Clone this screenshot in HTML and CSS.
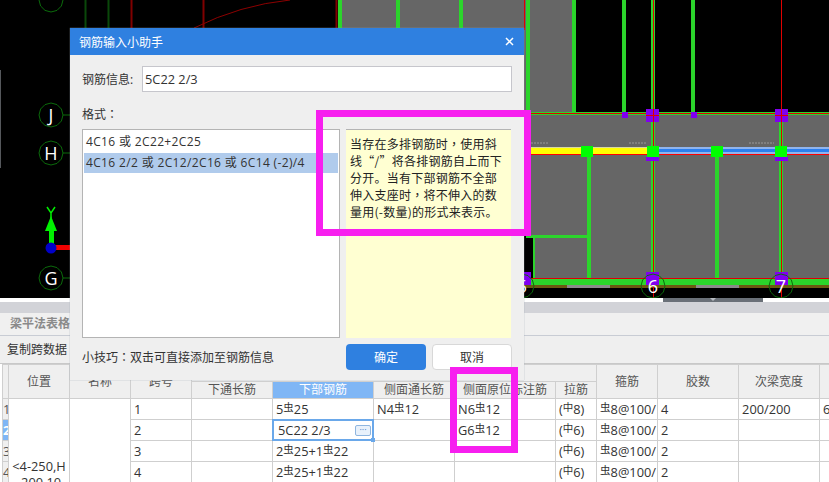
FILE: index.html
```html
<!DOCTYPE html>
<html>
    <head>
        <meta charset="utf-8">
        <meta name="viewport" content="initial-scale=1, width=device-width">
        <title>钢筋输入小助手</title>
        <link rel="stylesheet" href="styles.css">
    </head>
    <body>
    <svg class="cad" width="829" height="298" viewBox="0 0 829 298">
        <defs>
            <polygon id="axis" points="12,0 10.4,6 6,10.4 0,12 -6,10.4 -10.4,6 -12,0 -10.4,-6 -6,-10.4 0,-12 6,-10.4 10.4,-6" fill="none" stroke="#0b6b0b"/>
        </defs>
        <rect width="829" height="298" fill="#000"/>
        <rect x="0" y="70" width="1" height="98" fill="#55585c"/>
        <!-- grey slabs -->
        <rect x="342" y="0" width="184" height="115" fill="#666"/>
        <rect x="526" y="0" width="46" height="115" fill="#666"/>
        <rect x="531" y="115" width="298" height="120" fill="#666"/>
        <rect x="535" y="235" width="294" height="44" fill="#666"/>
        <!-- dim lines left of the slab -->
        <g stroke-width="2">
            <path d="M85.500 0V130M108.500 0V130" stroke="#0a480a"/>
            <path d="M131.500 0V130M203.500 0V30M336.500 0V40" stroke="#800000"/>
        </g>
        <path d="M194 28Q240 5 290 0" fill="none" stroke="#8c0000"/>
        <path d="M63 115H72M63 153H72M63 278H72" stroke="#0b6b0b"/>
        <!-- green walls -->
        <g fill="#2bd52b">
            <rect x="338" y="0" width="4" height="40"/>
            <rect x="396" y="0" width="4" height="40"/>
            <rect x="459" y="0" width="4" height="40"/>
            <rect x="526" y="0" width="4" height="115"/>
            <rect x="572" y="0" width="4" height="115"/>
            <rect x="622" y="0" width="4" height="115"/>
            <rect x="691" y="0" width="4" height="115"/>
            <rect x="651" y="0" width="4" height="115"/>
            <rect x="587" y="155" width="4" height="124"/>
            <rect x="715" y="155" width="4" height="124"/>
            <rect x="651" y="115" width="4" height="164"/>
            <rect x="779" y="115" width="4" height="164"/>
            <rect x="526" y="235" width="63" height="3"/>
            <rect x="533" y="238" width="2" height="41"/>
            <rect x="526" y="112" width="303" height="3"/>
            <rect x="524" y="279" width="305" height="6"/>
        </g>
        <rect x="524" y="285" width="305" height="3" fill="#6b5a12"/>
        <rect x="567" y="285" width="43" height="3" fill="#8a8a8a"/>
        <rect x="696" y="285" width="43" height="3" fill="#8a8a8a"/>
        <!-- red centre lines -->
        <path d="M530 113.500H829M524 278.500H829M524.500 0V30M653.500 0V298M781.500 0V298" stroke="#e00000"/>
        <!-- beam in the selection -->
        <rect x="531" y="147" width="116" height="7" fill="#ffff00"/>
        <rect x="531" y="147" width="116" height="1" fill="#d8d8a0"/>
        <rect x="659" y="147" width="170" height="7" fill="#8fb4ee"/>
        <rect x="659" y="149" width="170" height="3" fill="#2a7ff0"/>
        <rect x="531" y="154" width="298" height="1" fill="#f00"/>
        <path d="M531 143H548M629 143H646M749 143H774" stroke="#999" stroke-dasharray="2 1"/>
        <!-- columns and joints -->
        <g fill="#8000f0">
            <rect x="622" y="112" width="6" height="6"/>
            <rect x="691" y="112" width="6" height="6"/>
            <rect x="646" y="109" width="13" height="13"/>
            <rect x="775" y="109" width="13" height="13"/>
            <rect x="646" y="157" width="13" height="4"/>
            <rect x="775" y="157" width="13" height="4"/>
            <rect x="646" y="272" width="13" height="13"/>
            <rect x="775" y="272" width="13" height="13"/>
            <rect x="524" y="272" width="7" height="13"/>
        </g>
        <path d="M646 115.500H659M775 115.500H788M653.500 109V122M781.500 109V122" stroke="#e00000"/>
        <g fill="#00ff00">
            <rect x="581" y="146" width="12" height="11"/>
            <rect x="647" y="146" width="12" height="11"/>
            <rect x="711" y="146" width="12" height="11"/>
            <rect x="775" y="146" width="12" height="11"/>
        </g>
        <!-- axis bubbles -->
        <use href="#axis" x="51" y="0"/>
        <use href="#axis" x="51" y="115"/>
        <use href="#axis" x="51" y="153"/>
        <use href="#axis" x="51" y="278"/>
        <use href="#axis" x="522" y="286"/>
        <use href="#axis" x="653" y="286"/>
        <use href="#axis" x="781" y="286"/>
        <g class="axis-text" text-anchor="middle">
            <text x="51" y="122">J</text>
            <text x="51" y="160">H</text>
            <text x="51" y="285">G</text>
            <text x="522" y="293">5</text>
            <text x="653" y="293">6</text>
            <text x="781" y="293">7</text>
        </g>
        <!-- origin -->
        <rect x="49" y="225" width="5" height="23" fill="#00f000"/>
        <polygon points="51,216 57,231 45,231" fill="#00f000"/>
        <path d="M47 207L51 213L55 207M51 213V218" fill="none" stroke="#00f000" stroke-width="1.500"/>
        <rect x="51" y="245" width="20" height="5" fill="#f00000"/>
        <circle cx="51" cy="248" r="5.500" fill="#0000c8"/>
    </svg>
    <div class="scroll-strip"><div class="scroll-thumb"></div></div>
    <div class="grey-bar"></div>
    <div class="tabs"><span class="tab">梁平法表格</span></div>
    <div class="toolbar"><span>复制跨数据</span></div>

    <div class="grid-wrap">
    <table class="grid">
        <colgroup>
            <col class="c6"><col class="c61"><col class="c61"><col class="c61"><col class="c81"><col class="c101"><col class="c81"><col class="c101"><col class="c41"><col class="c61"><col class="c81"><col class="c81"><col class="c81">
        </colgroup>
        <thead>
            <tr class="head1">
                <th rowspan="2"></th>
                <th rowspan="2">位置</th>
                <th rowspan="2">名称</th>
                <th rowspan="2">跨号</th>
                <th colspan="5"></th>
                <th rowspan="2">箍筋</th>
                <th rowspan="2">胶数</th>
                <th rowspan="2">次梁宽度</th>
                <th rowspan="2"></th>
            </tr>
            <tr class="head2">
                <th class="top-blue">下通长筋</th>
                <th class="current">下部钢筋</th>
                <th>侧面通长筋</th>
                <th>侧面原位标注筋</th>
                <th>拉筋</th>
            </tr>
        </thead>
        <tbody>
            <tr>
                <td class="num">1</td>
                <td rowspan="7" class="pos">&lt;4-250,H<br>-200 10</td>
                <td rowspan="7"></td>
                <td>1</td><td></td>
                <td>5<span class="rb">虫</span>25</td>
                <td>N4<span class="rb">虫</span>12</td>
                <td>N6<span class="rb">虫</span>12</td>
                <td>(<span class="rb">中</span>8)</td>
                <td><span class="rb">虫</span>8@100/</td>
                <td>4</td><td>200/200</td><td>6</td>
            </tr>
            <tr>
                <td class="num num-on">2</td>
                <td>2</td><td></td>
                <td class="editing">
                    <div class="edit-box">
                        <span>5C22 2/3</span>
                        <span class="more">···</span>
                        <i class="handle"></i>
                    </div>
                </td>
                <td></td>
                <td>G6<span class="rb">虫</span>12</td>
                <td>(<span class="rb">中</span>6)</td>
                <td><span class="rb">虫</span>8@100/</td>
                <td>2</td><td></td><td></td>
            </tr>
            <tr>
                <td class="num">3</td>
                <td>3</td><td></td>
                <td>2<span class="rb">虫</span>25+1<span class="rb">虫</span>22</td>
                <td></td><td></td>
                <td>(<span class="rb">中</span>6)</td>
                <td><span class="rb">虫</span>8@100/</td>
                <td>2</td><td></td><td></td>
            </tr>
            <tr>
                <td class="num">4</td>
                <td>4</td><td></td>
                <td>2<span class="rb">虫</span>25+1<span class="rb">虫</span>22</td>
                <td></td><td></td>
                <td>(<span class="rb">中</span>6)</td>
                <td><span class="rb">虫</span>8@100/</td>
                <td>2</td><td></td><td></td>
            </tr>
            <tr><td class="num"></td><td colspan="10"></td></tr>
            <tr><td class="num"></td><td colspan="10"></td></tr>
            <tr><td class="num"></td><td colspan="10"></td></tr>
        </tbody>
    </table>
    </div>

    <div class="dialog">
        <div class="dialog-title">
            <span>钢筋输入小助手</span>
            <svg class="close" width="9" height="9" viewBox="0 0 9 9"><path d="M1 1L8 8M8 1L1 8" stroke="#fff" stroke-width="1.500"/></svg>
        </div>
        <div class="dialog-body">
            <div class="info-row">
                <label for="rebar-info">钢筋信息:</label>
                <input id="rebar-info" type="text" value="5C22 2/3" autocomplete="off">
            </div>
            <div class="format-label">格式<span class="mid">：</span></div>
            <div class="format-panes">
                <ul class="format-list">
                    <li>4C16 或 2C22+2C25</li>
                    <li class="selected">4C16 2/2 或 2C12/2C16 或 6C14 (-2)/4</li>
                </ul>
                <div class="format-note">当存在多排钢筋时<span class="mid">，</span>使用斜线“/”将各排钢筋自上而下分开。当有下部钢筋不全部伸入支座时<span class="mid">，</span>将不伸入的数量用(-数量)的形式来表示。</div>
            </div>
            <div class="dialog-foot">
                <span class="tip">小技巧<span class="mid">：</span>双击可直接添加至钢筋信息</span>
                <div class="buttons">
                    <button class="ok" type="button">确定</button>
                    <button class="cancel" type="button">取消</button>
                </div>
            </div>
        </div>
    </div>

    <div class="mark mark-note"></div>
    <div class="mark mark-cells"></div>
    </body>
</html>
```
FILE: styles.css
```css
html, body {
    margin: 0;
    height: 482px;
    overflow: hidden;
}
body {
    position: relative;
    background-color: #ffffff;
    font-family: "Open Sans", "Noto Sans CJK SC", sans-serif;
    font-size: 12px;
    color: #333333;
}
.cad {
    display: block;
}
.axis-text {
    font-family: "Open Sans", sans-serif;
    font-size: 18px;
    fill: #ffffff;
}
.mid {
    font-family: "Noto Sans CJK TC", sans-serif;
}
.scroll-strip {
    height: 4px;
    display: flex;
    padding-left: 663px;
}
.scroll-thumb {
    position: relative;
    width: 100px;
    background-color: #6a7078;
}
.scroll-thumb::after {
    content: "";
    position: absolute;
    left: 47px;
    top: 0;
    border: 3px solid transparent;
    border-top-color: #b8bcc2;
    border-bottom: 0;
}
.grey-bar {
    height: 11px;
    background-color: #d2d3d8;
}
.tabs {
    height: 22px;
    background-color: #f0f0f0;
    border-bottom: 1px solid #c8ccd4;
    padding-left: 3px;
}
.tab {
    display: block;
    width: 67px;
    line-height: 22px;
    padding-left: 7px;
    font-weight: bold;
    color: #8a8a8a;
    box-sizing: border-box;
}
.toolbar {
    height: 27px;
    line-height: 27px;
    padding-left: 7px;
    background-color: #efefef;
    border-bottom: 1px solid #c8c8c8;
}
.grid-wrap {
    padding-left: 2px;
    height: 118px;
    overflow: hidden;
}
.grid {
    border-collapse: collapse;
    table-layout: fixed;
    width: 874px;
}
.c6 { width: 6px; }
.c41 { width: 41px; }
.c61 { width: 61px; }
.c81 { width: 81px; }
.c101 { width: 101px; }
.grid th, .grid td {
    border: 1px solid #cfcfcf;
    padding: 0;
    overflow: hidden;
    white-space: nowrap;
}
.grid th {
    background-color: #efefef;
    font-weight: normal;
    color: #555555;
    line-height: 16px;
}
.head1 { height: 17px; }
.head2 { height: 17px; }
.grid th.top-blue {
    border-top-color: #7fb6f5;
}
.grid th.current {
    background-color: #7fb6f5;
    border-top-color: #7fb6f5;
    color: #ffffff;
}
.grid td {
    height: 20px;
    padding-left: 3px;
    font-size: 12.8px;
    line-height: 16px;
}
.grid td.num {
    padding: 0;
    background-color: #efefef;
    text-align: center;
    color: #555555;
}
.grid td.num-on {
    background-color: #7fb6f5;
    color: #ffffff;
    font-weight: bold;
}
.grid td.pos {
    padding: 4px 0 0;
    text-align: center;
}
.rb {
    font-size: 10.5px;
    line-height: 10px;
    vertical-align: 3px;
}
.grid td.editing {
    padding: 0;
    overflow: visible;
    position: relative;
}
.edit-box {
    position: absolute;
    top: -1px;
    left: -1px;
    right: -1px;
    bottom: -1px;
    border: 2px solid #6aa8ea;
    background-color: #ffffff;
    padding-left: 4px;
    display: flex;
    align-items: center;
    justify-content: space-between;
}
.more {
    width: 14px;
    height: 9px;
    margin-right: 1px;
    border: 1px solid #8fb6e0;
    border-radius: 2px;
    background-color: #e8f1fb;
    color: #3f7fc4;
    font-size: 9px;
    line-height: 8px;
    text-align: center;
}
.handle {
    position: absolute;
    right: -3px;
    bottom: -3px;
    width: 4px;
    height: 4px;
    background-color: #6aa8ea;
}
.dialog {
    position: absolute;
    left: 70px;
    top: 28px;
    width: 454px;
    height: 352px;
    background-color: #efefef;
    box-shadow: 0 0 1px #9aa4b4;
}
.dialog-title {
    height: 27px;
    padding: 0 10px 0 9px;
    display: flex;
    align-items: center;
    justify-content: space-between;
    background-color: #2f80e0;
    color: #ffffff;
}
.dialog-body {
    padding: 11px 12px 0 12px;
}
.info-row {
    display: flex;
    align-items: center;
}
.info-row label {
    width: 60px;
    white-space: nowrap;
}
.info-row input {
    flex: 1;
    height: 26px;
    padding: 0 2px;
    box-sizing: border-box;
    border: 1px solid #c6c6cc;
    font: inherit;
    font-size: 12.8px;
    color: #333333;
}
.format-label {
    margin-top: 13px;
    line-height: 18px;
}
.format-panes {
    display: flex;
    gap: 6px;
    margin-top: 5px;
    height: 209px;
}
.format-list {
    width: 258px;
    margin: 0;
    padding: 2px 1px;
    list-style: none;
    box-sizing: border-box;
    background-color: #ffffff;
    border: 1px solid #b4b4b4;
}
.format-list li {
    height: 20px;
    line-height: 20px;
    padding-left: 2px;
    margin-bottom: 1px;
    white-space: nowrap;
    letter-spacing: 0.35px;
}
.format-list li.selected {
    background-color: #b0cbec;
}
.format-note {
    flex: 1;
    padding: 5px 4px;
    margin-right: 1px;
    font-family: "Noto Sans CJK SC", sans-serif;
    letter-spacing: 0.25px;
    background-color: #ffffd2;
    border-top: 1px solid #b4b4b4;
    line-height: 17px;
    color: #222222;
}
.dialog-foot {
    margin-top: 6px;
    display: flex;
    align-items: center;
    justify-content: space-between;
}
.buttons {
    display: flex;
    gap: 6px;
}
.buttons button {
    width: 80px;
    height: 26px;
    border-radius: 4px;
    font: inherit;
    cursor: pointer;
}
.ok {
    background-color: #2f80e0;
    color: #ffffff;
    border: 0;
}
.cancel {
    background-color: #ffffff;
    color: #333333;
    border: 1px solid #d8d8d8;
}
.mark {
    position: absolute;
    box-sizing: border-box;
    border: 7px solid #f71fef;
}
.mark-note {
    left: 316px;
    top: 110px;
    width: 215px;
    height: 126px;
}
.mark-cells {
    left: 450px;
    top: 367px;
    width: 68px;
    height: 86px;
}
```
